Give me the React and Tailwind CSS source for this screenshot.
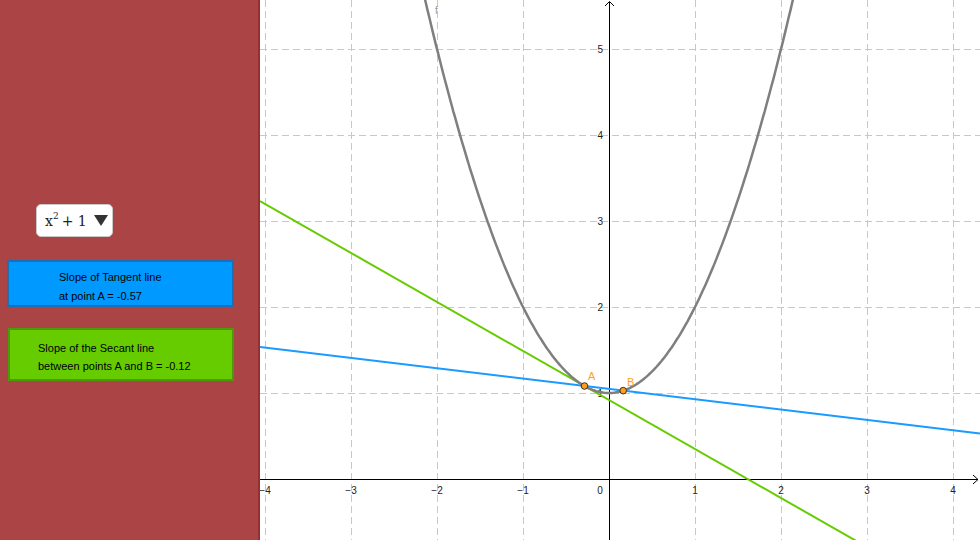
import React from 'react';

const X0 = 609;
const Y0 = 479;
const S = 86;

const px = (x) => X0 + x * S;
const py = (y) => Y0 - y * S;

const f = (x) => x * x + 1;

const a = -0.285;
const b = 0.165;
const tanSlope = 2 * a;
const secSlope = a + b;

const curvePath = () => {
  const pts = [];
  for (let x = -2.25; x <= 2.25; x += 0.02) {
    pts.push(`${px(x).toFixed(1)},${py(f(x)).toFixed(1)}`);
  }
  return 'M' + pts.join(' L');
};

const line = (slope) => {
  const x1 = (260 - X0) / S;
  const x2 = (980 - X0) / S;
  const y1 = f(a) + slope * (x1 - a);
  const y2 = f(a) + slope * (x2 - a);
  return { x1: px(x1), y1: py(y1), x2: px(x2), y2: py(y2) };
};

const Graph = () => {
  const xs = [-4, -3, -2, -1, 1, 2, 3, 4];
  const ys = [1, 2, 3, 4, 5];
  const green = line(tanSlope);
  const blue = line(secSlope);

  return (
    <svg width="720" height="540" viewBox="260 0 720 540" className="block bg-white">
      {/* grid */}
      {xs.map((x) => (
        <line key={'gx' + x} x1={px(x) + 0.5} y1="0" x2={px(x) + 0.5} y2="540" stroke="#c8c8c8" strokeWidth="1" strokeDasharray="7 4" />
      ))}
      {ys.map((y) => (
        <line key={'gy' + y} x1="260" y1={py(y) + 0.5} x2="980" y2={py(y) + 0.5} stroke="#c8c8c8" strokeWidth="1" strokeDasharray="7 4" />
      ))}

      {/* axes */}
      <line x1="260" y1={Y0 + 0.5} x2="978" y2={Y0 + 0.5} stroke="#000" strokeWidth="1" />
      <path d="M973 475 L978 479.5 L973 484" fill="none" stroke="#000" strokeWidth="1" />
      <line x1={X0 + 0.5} y1="540" x2={X0 + 0.5} y2="2" stroke="#000" strokeWidth="1" />
      <path d="M605 6 L609.5 1.5 L614 6" fill="none" stroke="#000" strokeWidth="1" />

      {/* tick labels */}
      <g fontFamily="'Liberation Sans', Arial, sans-serif" fontSize="10" fill="#222">
        {xs.map((x) => (
          <text key={'lx' + x} x={px(x)} y="494" textAnchor="middle">
            {x < 0 ? '\u2212' + Math.abs(x) : x}
          </text>
        ))}
        <text x="600" y="494" textAnchor="middle">0</text>
        {ys.map((y) => (
          <text key={'ly' + y} x="603" y={py(y) + 3.5} textAnchor="end">{y}</text>
        ))}
      </g>

      {/* lines */}
      <line {...blue} stroke="#1a9bff" strokeWidth="2" />
      <line {...green} stroke="#66cc00" strokeWidth="2" />

      {/* curve */}
      <path d={curvePath()} fill="none" stroke="#7f7f7f" strokeWidth="2.5" />
      <text x="435" y="14" fontFamily="'Liberation Sans', Arial, sans-serif" fontSize="10" fill="#999">f</text>

      {/* points */}
      <circle cx={px(a)} cy={py(f(a))} r="3.3" fill="#ff9f1a" stroke="#333" strokeWidth="1" />
      <circle cx={px(b)} cy={py(f(b))} r="3.3" fill="#ff9f1a" stroke="#333" strokeWidth="1" />
      <g fontFamily="'Liberation Sans', Arial, sans-serif" fontSize="11" fill="#ff9f1a">
        <text x="588" y="380">A</text>
        <text x="627" y="386">B</text>
      </g>
    </svg>
  );
};

export default function App() {
  return (
    <div className="flex w-[980px] h-[540px] overflow-hidden bg-white font-['Liberation_Sans',Arial,sans-serif]">
      <div className="w-[260px] h-full bg-[#ab4545] border-r-2 border-[#962f2f] shrink-0 flex flex-col">
        <div className="pt-[204px] pl-[36px]">
          <div className="w-[77px] h-[33px] bg-white border border-[#c9c9c9] rounded-[5px] flex items-center pl-[8px] gap-[7px]">
            <span className="font-['DejaVu_Serif','Liberation_Serif',serif] text-[14px] text-[#222] leading-none whitespace-nowrap">
              x<sup className="text-[9px] -top-[7px]">2</sup>
              <span className="ml-[3px]">+ 1</span>
            </span>
            <svg width="14" height="11" viewBox="0 0 14 11">
              <path d="M0 0 L14 0 L7 11 Z" fill="#333" />
            </svg>
          </div>
        </div>

        <div className="mt-[23px] ml-[7px] w-[227px] h-[47px] bg-[#0099ff] border-2 border-[#1d6eb4] pl-[50px] pt-[6px] text-[11px] leading-[19px] text-black">
          <div>Slope of Tangent line</div>
          <div>at point A = -0.57</div>
        </div>

        <div className="mt-[21px] ml-[8px] w-[226px] h-[53px] bg-[#66cc00] border-2 border-[#4c9a0a] pl-[28px] pt-[9px] text-[11px] leading-[18px] text-black">
          <div>Slope of the Secant line</div>
          <div>between points A and B = -0.12</div>
        </div>
      </div>
      <Graph />
    </div>
  );
}
